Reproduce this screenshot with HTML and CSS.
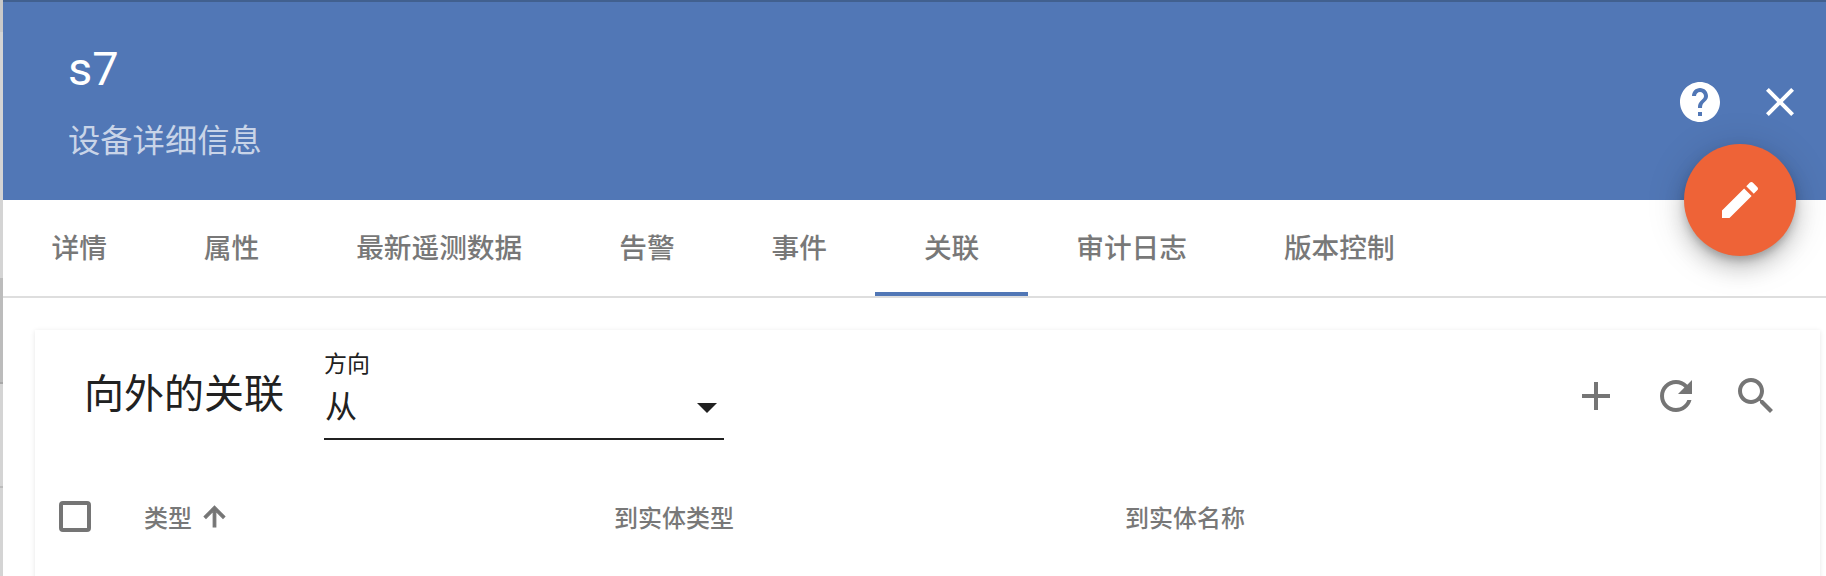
FILE: index.html
```html
<!DOCTYPE html>
<html lang="zh-CN">
<head>
  <meta charset="UTF-8" />
  <title>s7 - 设备详细信息</title>
  <link rel="stylesheet" href="styles.css">
</head>
<body>
  <div class="page">
    <!-- sliver of the page behind the drawer -->
    <div class="backdrop">
      <div class="seg seg-top"></div>
      <div class="seg seg-light"></div>
      <div class="seg seg-dark"></div>
      <div class="seg seg-line"></div>
      <div class="seg seg-mid"></div>
      <div class="seg seg-thin"></div>
      <div class="seg seg-rest"></div>
    </div>

    <div class="drawer">
      <div class="header">
        <div class="header-text">
          <div class="title">s7</div>
          <div class="subtitle">设备详细信息</div>
        </div>
        <div class="header-actions">
          <button class="icon-btn white">
            <svg viewBox="0 0 24 24"><path d="M12 2C6.48 2 2 6.48 2 12s4.48 10 10 10 10-4.48 10-10S17.52 2 12 2zm1 17h-2v-2h2v2zm2.07-7.75l-.9.92C13.45 12.9 13 13.5 13 15h-2v-.5c0-1.1.45-2.1 1.17-2.83l1.24-1.26c.37-.36.59-.86.59-1.41 0-1.1-.9-2-2-2s-2 .9-2 2H8c0-2.21 1.79-4 4-4s4 1.79 4 4c0 .88-.36 1.68-.93 2.25z"/></svg>
          </button>
          <button class="icon-btn white">
            <svg viewBox="0 0 24 24"><path d="M19 6.41L17.59 5 12 10.59 6.41 5 5 6.41 10.59 12 5 17.59 6.41 19 12 13.41 17.59 19 19 17.59 13.41 12z"/></svg>
          </button>
        </div>
      </div>

      <button class="fab">
        <svg viewBox="0 0 24 24"><path d="M3 17.25V21h3.75L17.81 9.94l-3.75-3.75L3 17.25zM20.71 7.04c.39-.39.39-1.02 0-1.41l-2.34-2.34c-.39-.39-1.02-.39-1.41 0l-1.83 1.83 3.75 3.75 1.83-1.83z"/></svg>
      </button>

      <!-- Tabs -->
      <div class="tabs">
        <div class="tab">详情</div>
        <div class="tab">属性</div>
        <div class="tab">最新遥测数据</div>
        <div class="tab">告警</div>
        <div class="tab">事件</div>
        <div class="tab active">关联</div>
        <div class="tab">审计日志</div>
        <div class="tab">版本控制</div>
      </div>

      <!-- Relations table -->
      <div class="card">
        <div class="toolbar">
          <div class="card-title">向外的关联</div>
          <div class="select">
            <div class="select-label">方向</div>
            <div class="select-value">
              <span class="select-text">从</span>
              <span class="caret"></span>
            </div>
          </div>
          <div class="toolbar-actions">
            <button class="icon-btn">
              <svg viewBox="0 0 24 24"><path d="M19 13h-6v6h-2v-6H5v-2h6V5h2v6h6v2z"/></svg>
            </button>
            <button class="icon-btn">
              <svg viewBox="0 0 24 24"><path d="M17.65 6.35C16.2 4.9 14.21 4 12 4c-4.42 0-7.99 3.58-7.99 8s3.57 8 7.99 8c3.73 0 6.84-2.55 7.73-6h-2.08c-.82 2.33-3.04 4-5.65 4-3.31 0-6-2.69-6-6s2.69-6 6-6c1.66 0 3.14.69 4.22 1.78L13 11h7V4l-2.35 2.35z"/></svg>
            </button>
            <button class="icon-btn">
              <svg viewBox="0 0 24 24"><path d="M15.5 14h-.79l-.28-.27C15.41 12.59 16 11.11 16 9.5 16 5.91 13.09 3 9.5 3S3 5.91 3 9.5 5.91 16 9.5 16c1.61 0 3.09-.59 4.23-1.57l.27.28v.79l5 4.99L20.49 19l-4.99-5zm-6 0C7.01 14 5 11.99 5 9.5S7.01 5 9.5 5 14 7.01 14 9.5 11.99 14 9.5 14z"/></svg>
            </button>
          </div>
        </div>
        <div class="table-head">
          <div class="cell-check"><span class="checkbox"></span></div>
          <div class="cell sorted">
            <span>类型</span>
            <svg viewBox="0 0 24 24"><path d="M4 12l1.41 1.41L11 7.83V20h2V7.83l5.58 5.59L20 12l-8-8-8 8z"/></svg>
          </div>
          <div class="cell">到实体类型</div>
          <div class="cell">到实体名称</div>
        </div>
      </div>
    </div>
  </div>
</body>
</html>
```

FILE: styles.css
```css
html, body {
  margin: 0;
  padding: 0;
  background: #fff;
}
body {
  font-family: Roboto, "Noto Sans CJK SC", sans-serif;
  color: #212121;
}
button {
  border: none;
  background: none;
  padding: 0;
  cursor: pointer;
}
.page {
  display: flex;
  width: 1826px;
  height: 576px;
  overflow: hidden;
}
.backdrop {
  display: flex;
  flex-direction: column;
  width: 3px;
  flex: none;
}
.seg-top { height: 32px; background: #c9c9c9; }
.seg-light { height: 246px; background: #d4d4d4; }
.seg-dark { height: 104px; background: #bcbcbc; }
.seg-line { height: 2px; background: #a8a8a8; }
.seg-mid { height: 102px; background: #d4d4d4; }
.seg-thin { height: 2px; background: #bcbcbc; }
.seg-rest { flex: 1; background: #d4d4d4; }

.drawer {
  position: relative;
  flex: 1;
  min-width: 0;
}
.header {
  display: flex;
  justify-content: space-between;
  height: 200px;
  box-sizing: border-box;
  padding: 0 6px 0 65px;
  background: #5177b6;
  border-top: 2px solid #41608f;
  color: #fff;
}
.title {
  margin-top: 39px;
  font-size: 47px;
  line-height: 56px;
}
.subtitle {
  margin-top: 22px;
  font-size: 32.3px;
  line-height: 44px;
  color: rgba(255, 255, 255, 0.7);
}
.header-actions {
  display: flex;
  margin-top: 60px;
  height: 80px;
}
.icon-btn {
  display: flex;
  align-items: center;
  justify-content: center;
  width: 80px;
  height: 80px;
}
.icon-btn svg {
  width: 48px;
  height: 48px;
  fill: #757575;
}
.icon-btn.white svg { fill: #fff; }

.fab {
  position: absolute;
  top: 144px;
  left: 1681px;
  display: flex;
  align-items: center;
  justify-content: center;
  width: 112px;
  height: 112px;
  border-radius: 50%;
  background: #ee6337;
  box-shadow: 0 6px 10px -2px rgba(0, 0, 0, 0.25), 0 12px 20px 2px rgba(0, 0, 0, 0.14), 0 4px 36px 6px rgba(0, 0, 0, 0.1);
}
.fab svg {
  width: 48px;
  height: 48px;
  fill: #fff;
}

.tabs {
  display: flex;
  height: 98px;
  box-sizing: border-box;
  border-bottom: 2px solid #dedede;
}
.tab {
  height: 96px;
  box-sizing: border-box;
  padding: 31px 48.5px 0;
  font-size: 27.68px;
  line-height: 36px;
  font-weight: 500;
  color: #787878;
}
.tab.active {
  border-bottom: 4px solid #5177b6;
}

.card {
  margin: 32px 6px 0 32px;
  height: 400px;
  background: #fff;
  box-shadow: 0 1px 5px rgba(0, 0, 0, 0.1);
}
.toolbar {
  display: flex;
  align-items: center;
  height: 132px;
  box-sizing: border-box;
  padding: 0 24px 0 49px;
}
.card-title {
  width: 240px;
  font-size: 40px;
  line-height: 48px;
  margin-top: -2px;
}
.select {
  align-self: flex-start;
  width: 400px;
  margin-top: 22px;
  border-bottom: 2px solid #212121;
}
.select-label {
  font-size: 23px;
  line-height: 26px;
}
.select-value {
  display: flex;
  align-items: center;
  justify-content: space-between;
  padding: 0 7px 0 1px;
  height: 60px;
  font-size: 32px;
}
.select-text {
  margin-bottom: 8px;
}
.caret {
  width: 0;
  height: 0;
  border-left: 10px solid transparent;
  border-right: 10px solid transparent;
  border-top: 10px solid #212121;
}
.toolbar-actions {
  display: flex;
  margin-left: auto;
}

.table-head {
  display: grid;
  grid-template-columns: 85px 470px 511px 1fr;
  align-items: center;
  height: 108px;
  box-sizing: border-box;
  padding-left: 24px;
  font-size: 24px;
  font-weight: 500;
  color: #787878;
}
.checkbox {
  display: block;
  width: 32px;
  height: 31px;
  box-sizing: border-box;
  border: 4px solid #757575;
  border-radius: 4px;
}
.sorted {
  display: flex;
  align-items: center;
  gap: 7px;
}
.sorted svg {
  width: 31px;
  height: 31px;
  fill: #757575;
  stroke: #757575;
  stroke-width: 0.9;
}
```
